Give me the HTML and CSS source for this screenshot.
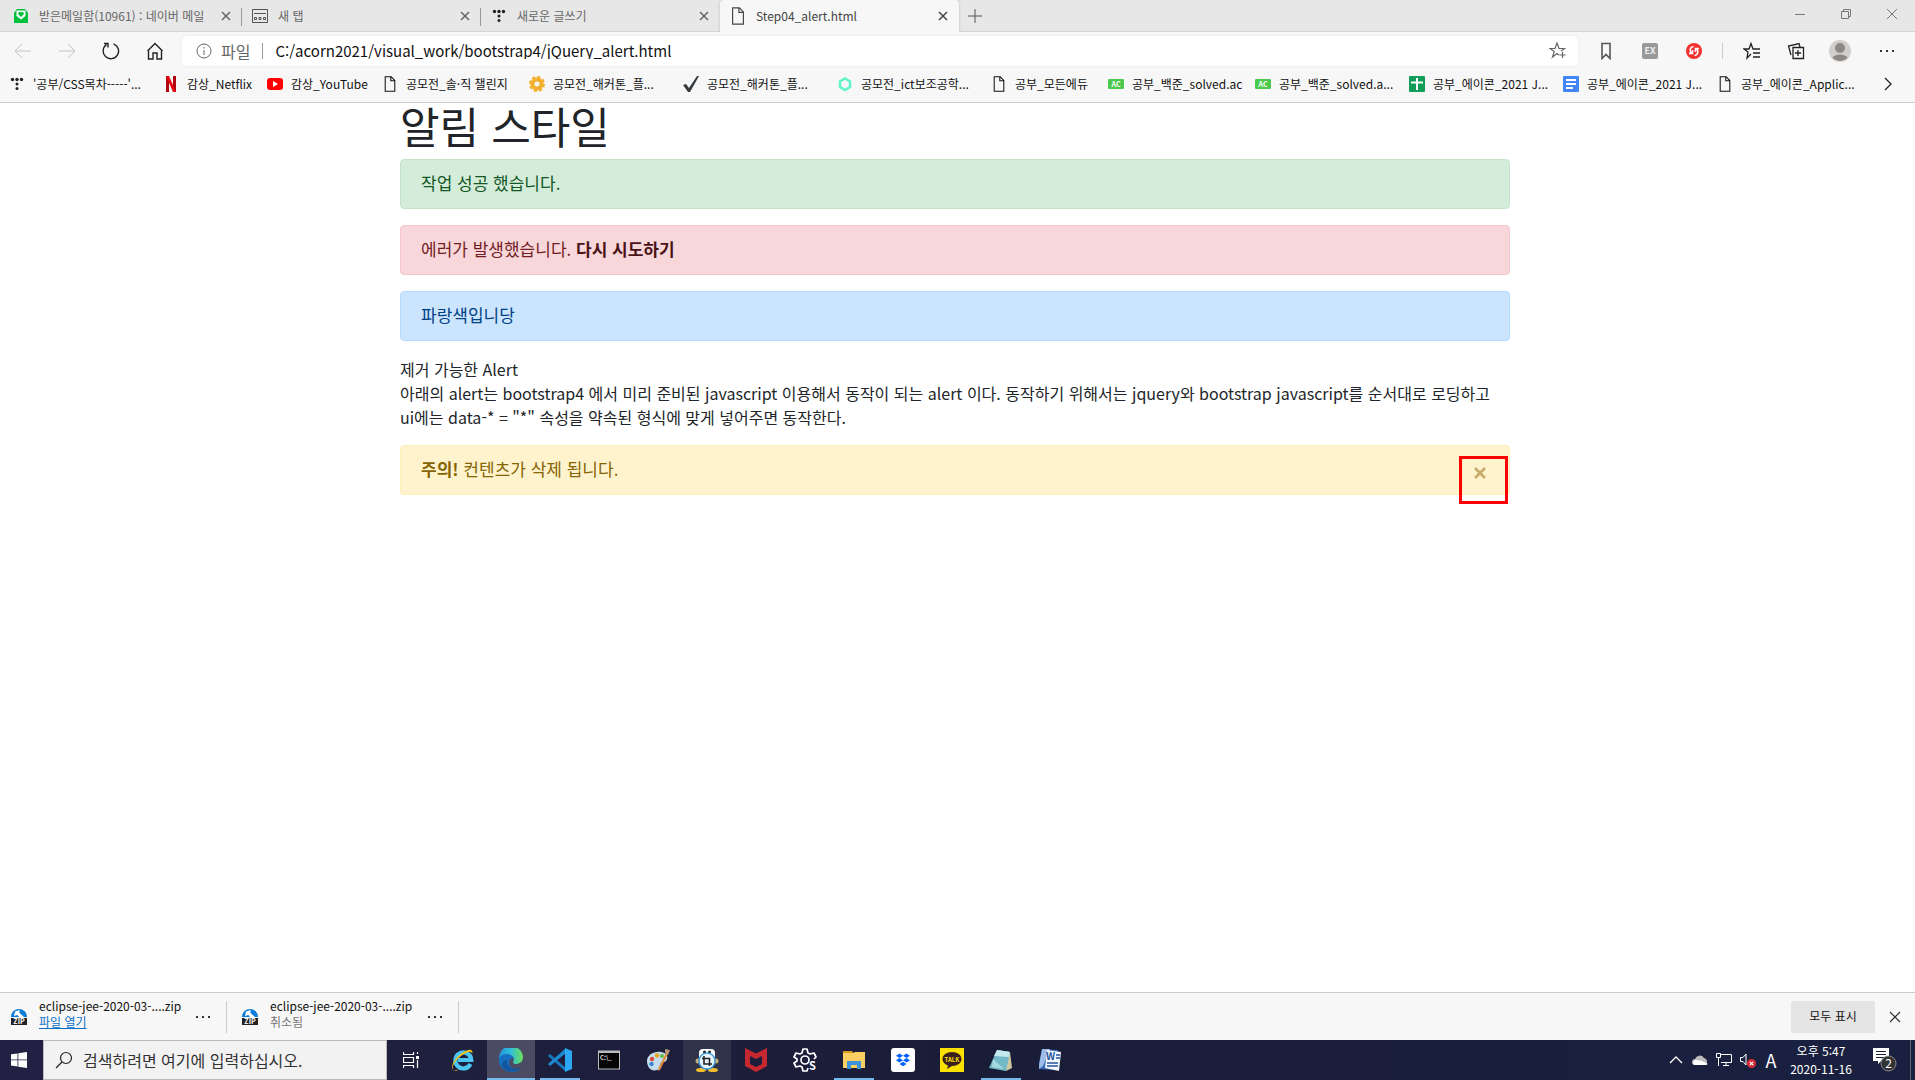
FILE: index.html
```html
<!DOCTYPE html>
<html lang="ko">
<head>
<meta charset="utf-8">
<title>Step04_alert.html</title>
<link rel="stylesheet" href="styles.css">
</head>
<body>
<svg class="defs" aria-hidden="true">
  <symbol id="i-x" viewBox="0 0 16 16"><path d="M4 4l8 8M12 4l-8 8" fill="none" stroke="currentColor" stroke-width="1.5"/></symbol>
  <symbol id="i-page" viewBox="0 0 16 20"><path d="M2 1h7.500l4.500 4.500v13.500h-12zM9 1v5h5" fill="none" stroke="currentColor" stroke-width="1.300"/></symbol>
  <symbol id="i-tistory" viewBox="0 0 16 16"><g fill="#222"><circle cx="3.500" cy="3.500" r="1.700"/><circle cx="8" cy="3.500" r="1.700"/><circle cx="12.500" cy="3.500" r="1.700"/><circle cx="8" cy="8" r="1.500"/><circle cx="8" cy="12.500" r="1.500"/></g></symbol>
  <symbol id="i-dots" viewBox="0 0 16 16"><g fill="#333"><rect x="1" y="7" width="2" height="2"/><rect x="7" y="7" width="2" height="2"/><rect x="13" y="7" width="2" height="2"/></g></symbol>
</svg>

<header class="browser">
  <div class="tabs">
    <div class="tab">
      <svg class="ico" viewBox="0 0 16 16"><path d="M1 5l3-4h8l3 4v10H1z" fill="#03c03c"/><path d="M3.500 2.500h9v5.500L8 11.500 3.500 8z" fill="#fff"/><path d="M8 9L5.500 6.500a1.500 1.500 0 0 1 2.500-2 1.500 1.500 0 0 1 2.500 2z" fill="#03c03c"/></svg>
      <span class="tab-title">받은메일함(10961) : 네이버 메일</span>
      <button class="tab-close" aria-label="닫기"><svg><use href="#i-x"/></svg></button>
    </div>
    <div class="tab">
      <svg class="ico" viewBox="0 0 16 16"><g fill="none" stroke="#555"><path d="M.5 1.500h15v13H.5zM2 5.500h12"/><path d="M2.500 9.500h2v2h-2zM7 9.500h2v2H7zM11.500 9.500h2v2h-2z"/></g></svg>
      <span class="tab-title">새 탭</span>
      <button class="tab-close" aria-label="닫기"><svg><use href="#i-x"/></svg></button>
    </div>
    <div class="tab">
      <svg class="ico"><use href="#i-tistory"/></svg>
      <span class="tab-title">새로운 글쓰기</span>
      <button class="tab-close" aria-label="닫기"><svg><use href="#i-x"/></svg></button>
    </div>
    <div class="tab active">
      <svg class="ico"><use href="#i-page"/></svg>
      <span class="tab-title">Step04_alert.html</span>
      <button class="tab-close" aria-label="닫기"><svg><use href="#i-x"/></svg></button>
    </div>
    <button class="new-tab" aria-label="새 탭"><svg viewBox="0 0 14 14"><path d="M7 0v14M0 7h14" stroke="#555"/></svg></button>
    <div class="window-controls">
      <button aria-label="최소화"><svg viewBox="0 0 12 12"><path d="M1 6.500h10" stroke="#777"/></svg></button>
      <button aria-label="이전 크기로"><svg viewBox="0 0 12 12"><path d="M1.500 3.500h7v7h-7zM3.500 3.500v-2h7v7h-2" fill="none" stroke="#777"/></svg></button>
      <button aria-label="창 닫기"><svg viewBox="0 0 12 12"><path d="M1 1l10 10M11 1L1 11" stroke="#777"/></svg></button>
    </div>
  </div>

  <div class="toolbar">
    <div class="nav">
      <button aria-label="뒤로"><svg viewBox="0 0 18 18"><path d="M17 9H1M8 2L1 9l7 7" fill="none" stroke="#c4c4c4"/></svg></button>
      <button aria-label="앞으로"><svg viewBox="0 0 18 18"><path d="M1 9h16M10 2l7 7-7 7" fill="none" stroke="#c4c4c4"/></svg></button>
      <button aria-label="새로 고침"><svg viewBox="0 0 18 18"><path d="M11.500 1.800A7.700 7.700 0 1 1 4.500 2.700M2 1.500h4v4" fill="none" stroke="#222" stroke-width="1.400"/></svg></button>
      <button aria-label="홈"><svg viewBox="0 0 18 18"><path d="M2.500 8v9h4.500v-6h4v6h4.500V8M1.500 9L9 1.500 16.500 9" fill="none" stroke="#222" stroke-width="1.400"/></svg></button>
    </div>
    <div class="address">
      <svg class="info" viewBox="0 0 16 16"><circle cx="8" cy="8" r="7" fill="none" stroke="#666"/><path d="M8 7v5M8 4v1.500" stroke="#666"/></svg>
      <span class="scheme">파일</span>
      <input class="url" type="text" aria-label="주소" value="C:/acorn2021/visual_work/bootstrap4/jQuery_alert.html">
      <button class="fav" aria-label="즐겨찾기에 추가"><svg viewBox="0 0 18 18"><path d="M10 13l-2-1.500L3.500 15l1.700-5.500L1 6.500h5L8 1l2 5.500h5.500L12 9M13.500 10v6M10.500 13h6" fill="none" stroke="#666" stroke-width="1.200"/></svg></button>
    </div>
    <div class="actions">
      <button aria-label="책갈피"><svg viewBox="0 0 18 18"><path d="M5 1.500h8v15l-4-4-4 4z" fill="none" stroke="#555" stroke-width="1.600"/></svg></button>
      <button aria-label="EX"><svg viewBox="0 0 18 18"><rect x="1" y="1" width="16" height="16" rx="2" fill="#999"/><text x="9" y="12" font-size="9" font-weight="700" text-anchor="middle" fill="#eee">EX</text></svg></button>
      <button aria-label="동기화"><svg viewBox="0 0 18 18"><circle cx="9" cy="9" r="8" fill="#f6302f"/><path d="M8.500 4.500C5.500 5 4.500 8 5.500 10l1 1.500M4 11.500h3.500V8M9.500 13.500c3-.5 4-3.500 3-5.500l-1-1.500M14 6.500h-3.500V10" fill="none" stroke="#fff" stroke-width="1.600"/></svg></button>
      <span class="rule"></span>
      <button aria-label="즐겨찾기"><svg viewBox="0 0 18 18"><path d="M8 12l-4 4 1-6-4-3h5l2-5.500L10 7h7M10 11h7M10 15h7" fill="none" stroke="#222" stroke-width="1.300"/></svg></button>
      <button aria-label="컬렉션"><svg viewBox="0 0 18 18"><path d="M6 5.500h10.500v11H6zM11 8v6M8 11h6M4 13L1.500 4 12 1.500 13 5" fill="none" stroke="#222" stroke-width="1.300"/></svg></button>
      <button aria-label="프로필"><svg class="avatar" viewBox="0 0 22 22"><circle cx="11" cy="11" r="11" fill="#d0cfcd"/><circle cx="11" cy="8" r="5" fill="#8b8886"/><path d="M3.500 18a8 5.500 0 0 1 15 0 11 11 0 0 1-15 0z" fill="#8b8886"/></svg></button>
      <button class="menu" aria-label="설정"><svg><use href="#i-dots"/></svg></button>
    </div>
  </div>

  <nav class="bookmarks">
    <a href="#"><svg class="ico"><use href="#i-tistory"/></svg><span>'공부/CSS목차-----'...</span></a>
    <a href="#"><svg class="ico" viewBox="0 0 16 16"><path d="M3 0h3v16H3zM10 0h3v16h-3z" fill="#b1060f"/><path d="M3 0h3l7 16h-3z" fill="#e50914"/></svg><span>감상_Netflix</span></a>
    <a href="#"><svg class="ico" viewBox="0 0 16 16"><rect y="2" width="16" height="12" rx="3" fill="#f00"/><path d="M6 5l5 3-5 3z" fill="#fff"/></svg><span>감상_YouTube</span></a>
    <a href="#"><svg class="ico"><use href="#i-page"/></svg><span>공모전_솔·직 챌린지</span></a>
    <a href="#"><svg class="ico" viewBox="0 0 16 16"><circle cx="8" cy="8" r="4.500" fill="none" stroke="#f2b02e" stroke-width="4"/><circle cx="8" cy="8" r="6.700" fill="none" stroke="#f2b02e" stroke-width="2.600" stroke-dasharray="3.260 2"/></svg><span>공모전_해커톤_플...</span></a>
    <a href="#"><svg class="ico" viewBox="0 0 16 16"><path d="M0 9l3-1 3 4L14 0h2L7 16H5z" fill="#333a40"/></svg><span>공모전_해커톤_플...</span></a>
    <a href="#"><svg class="ico" viewBox="0 0 16 16"><path d="M8 2.500l5 3v5.500l-5 3-5-3V5.500z" fill="none" stroke="#5df5c8" stroke-width="2.400"/></svg><span>공모전_ict보조공학...</span></a>
    <a href="#"><svg class="ico"><use href="#i-page"/></svg><span>공부_모든에듀</span></a>
    <a href="#"><svg class="ico" viewBox="0 0 16 16"><rect y="3" width="16" height="10" rx="1" fill="#4cc94c"/><text x="8" y="11" font-size="7" font-weight="700" text-anchor="middle" fill="#fff">AC</text></svg><span>공부_백준_solved.ac</span></a>
    <a href="#"><svg class="ico" viewBox="0 0 16 16"><rect y="3" width="16" height="10" rx="1" fill="#4cc94c"/><text x="8" y="11" font-size="7" font-weight="700" text-anchor="middle" fill="#fff">AC</text></svg><span>공부_백준_solved.a...</span></a>
    <a href="#"><svg class="ico" viewBox="0 0 16 16"><rect width="16" height="16" rx="1" fill="#0f9d58"/><path d="M8 2v12M2 6.500h12" stroke="#fff" stroke-width="2"/></svg><span>공부_에이콘_2021 J...</span></a>
    <a href="#"><svg class="ico" viewBox="0 0 16 16"><rect width="16" height="16" rx="1" fill="#4285f4"/><path d="M3 4h10M3 8h10M3 12h7" stroke="#fff" stroke-width="2"/></svg><span>공부_에이콘_2021 J...</span></a>
    <a href="#"><svg class="ico"><use href="#i-page"/></svg><span>공부_에이콘_Applic...</span></a>
    <button class="more" aria-label="더 보기"><svg viewBox="0 0 8 14"><path d="M1 1l6 6-6 6" fill="none" stroke="#222" stroke-width="1.300"/></svg></button>
  </nav>
</header>

<main class="page">
  <div class="container">
    <h1>알림 스타일</h1>
    <div class="alert success">작업 성공 했습니다.</div>
    <div class="alert danger">에러가 발생했습니다. <a href="#">다시 시도하기</a></div>
    <div class="alert primary">파랑색입니당</div>
    <p>제거 가능한 Alert<br>아래의 alert는 bootstrap4 에서 미리 준비된 javascript 이용해서 동작이 되는 alert 이다. 동작하기 위해서는 jquery와 bootstrap javascript를 순서대로 로딩하고<br>ui에는 data-* = "*" 속성을 약속된 형식에 맞게 넣어주면 동작한다.</p>
    <div class="alert warning">
      <strong>주의!</strong> 컨텐츠가 삭제 됩니다.
      <button class="close" aria-label="닫기"><svg viewBox="0 0 12 12"><path d="M1 1l10 10M11 1L1 11" stroke="#c6aa68" stroke-width="2.600"/></svg></button>
      <span class="marker"></span>
    </div>
  </div>
</main>

<section class="downloads">
  <div class="download">
    <svg class="ico" viewBox="0 0 16 16"><path d="M0 8a8 8 0 0 1 16 0z" fill="#0a7bd6"/><path d="M4 2.500L8.500 1v3l4.500 4H8L6.500 6 3 7z" fill="#fff"/><rect y="9" width="16" height="7" fill="#222"/><text x="8" y="15" font-size="7" font-weight="700" text-anchor="middle" fill="#fff">ZIP</text></svg>
    <div class="file"><span>eclipse-jee-2020-03-....zip</span><a href="#">파일 열기</a></div>
    <button aria-label="옵션"><svg class="ico"><use href="#i-dots"/></svg></button>
  </div>
  <div class="download">
    <svg class="ico" viewBox="0 0 16 16"><path d="M0 8a8 8 0 0 1 16 0z" fill="#0a7bd6"/><path d="M4 2.500L8.500 1v3l4.500 4H8L6.500 6 3 7z" fill="#fff"/><rect y="9" width="16" height="7" fill="#222"/><text x="8" y="15" font-size="7" font-weight="700" text-anchor="middle" fill="#fff">ZIP</text></svg>
    <div class="file"><span>eclipse-jee-2020-03-....zip</span><span class="state">취소됨</span></div>
    <button aria-label="옵션"><svg class="ico"><use href="#i-dots"/></svg></button>
  </div>
  <button class="show-all">모두 표시</button>
  <button class="bar-close" aria-label="닫기"><svg viewBox="0 0 12 12"><path d="M1 1l10 10M11 1L1 11" stroke="#333" stroke-width="1.200"/></svg></button>
</section>

<footer class="taskbar">
  <button class="start" aria-label="시작"><svg viewBox="0 0 16 16"><path d="M0 2.300l6.500-.9v6.100H0zM7.300 1.200L16 0v7.500H7.300zM0 8.300h6.500v6.200L0 13.600zM7.300 8.300H16V16l-8.700-1.200z" fill="#fff"/></svg></button>
  <label class="search">
    <svg viewBox="0 0 18 18"><circle cx="11" cy="7" r="5.500" fill="none" stroke="#222" stroke-width="1.200"/><path d="M7 11l-6 6" stroke="#222" stroke-width="1.300"/></svg>
    <input type="text" aria-label="검색" placeholder="검색하려면 여기에 입력하십시오.">
  </label>
  <div class="apps">
    <button aria-label="작업 보기"><svg class="small" viewBox="0 0 16 16"><path d="M.5 0v2.500h10V0M.5 5.500h10v5H.5zM.5 16v-2.500h10V16M14.500 0v2M14.500 8v8" fill="none" stroke="#fff" stroke-width="1.200"/><path d="M13 4h3v3h-3z" fill="#fff"/></svg></button>
    <button aria-label="Internet Explorer"><svg viewBox="0 0 24 24"><path d="M20.500 16a8 8 0 1 1 .8-4H8" fill="none" stroke="#4cc5f3" stroke-width="4.200"/><path d="M3 22C-1 18 8 5 18 2c4-1 5 1 4 4 0-3-3-3-7-.5C8 9 1 17 3 22c1 1 4 0 6-1-2 2-5 2.500-6 1z" fill="#f5c21b"/></svg></button>
    <button class="open current" aria-label="Edge"><svg viewBox="0 0 24 24"><defs><linearGradient id="eg" x1="0" x2="1"><stop stop-color="#2492dc"/><stop offset=".5" stop-color="#30bfd7"/><stop offset="1" stop-color="#6ee05a"/></linearGradient></defs><path d="M0 11A12 12 0 0 1 24 9c0 5-4 7-7 7-4 0-3-2-2-4 0-3-3-5-6-5-4 0-7 2-9 4z" fill="url(#eg)"/><path d="M0 11c1-3 4-5 8-5 4 0 7 3 7 5-2-2-5 0-5 4s4 6 8 6c2 0 3-1 4-1-2 3-6 4-9 4C5 24-1 18 0 11z" fill="#1670c2"/><path d="M8 12c-1 6 4 9 9 9l5-2c-5 8-18 5-19-2 0-3 2-5 5-5z" fill="#114a8b" opacity=".65"/></svg></button>
    <button class="open" aria-label="Visual Studio Code"><svg viewBox="0 0 24 24"><path d="M0 8l2-2 16 14v4z" fill="#1679bd"/><path d="M0 16l2 2L18 5V0z" fill="#1b8ad3"/><path d="M17 0l7 3v18l-7 3z" fill="#2ba7f3"/></svg></button>
    <button aria-label="명령 프롬프트"><svg viewBox="0 0 24 24"><rect x="1" y="2.500" width="22" height="19" fill="#bbb"/><rect x="2" y="5" width="20" height="15.500" fill="#050505"/><text x="3" y="12" font-size="6" font-weight="700" fill="#ddd">C:\_</text></svg></button>
    <button aria-label="그림판"><svg viewBox="0 0 24 24"><path d="M1 13C1 7 8 3 15 4c6 1 8 5 5 9-2 2-3 0-5 2s1 6-4 7C5 24 1 19 1 13z" fill="#c4ddec"/><circle cx="6" cy="11" r="2.200" fill="#df4736"/><circle cx="11" cy="7.500" r="2.200" fill="#e9a21d"/><circle cx="16" cy="8" r="2" fill="#68b843"/><circle cx="5.500" cy="16" r="2.200" fill="#3e86cf"/><path d="M21 3l2 1-9 18-2 1 .5-3z" fill="#e38b3c"/><path d="M19 1l5 1-2 5-3-2z" fill="#b69474"/></svg></button>
    <button class="hovered" aria-label="캡처 도구"><svg viewBox="0 0 24 24"><path d="M4 5a4 4 0 0 1 4-4h8a4 4 0 0 1 4 4v4H4z" fill="#fff"/><circle cx="9.500" cy="4" r="1.500" fill="#222"/><circle cx="14.500" cy="4" r="1.500" fill="#222"/><circle cx="3" cy="13" r="2.500" fill="#c8ac75"/><circle cx="21" cy="13" r="2.500" fill="#c8ac75"/><ellipse cx="6" cy="22" rx="5" ry="2" fill="#f4bd2b"/><ellipse cx="18" cy="22" rx="5" ry="2" fill="#f4bd2b"/><circle cx="12" cy="13" r="8" fill="#e9f5fc" stroke="#3d9bdc" stroke-width="1.500"/><path d="M9 8v8h8M7 10.500h7.500V18" fill="none" stroke="#222" stroke-width="1.600"/></svg></button>
    <button aria-label="McAfee"><svg viewBox="0 0 24 24"><path d="M1 0l11 5.500L23 0v18l-11 6-11-6zM6 8v8l6 3 6-3V8l-6 3z" fill="#c5282f" fill-rule="evenodd"/></svg></button>
    <button aria-label="설정 도구"><svg viewBox="0 0 24 24"><path d="M15 20l-1 3h-4l-1-4-2-1-4 1-2-4 3-2v-2L1 9l2-4 4 1 2-1 1-4h4l1 4 2 1 4-1 2 4-2 2" fill="none" stroke="#fff" stroke-width="1.700" stroke-linejoin="round"/><circle cx="12" cy="12" r="4" fill="none" stroke="#fff" stroke-width="1.700"/><text x="16" y="22" font-size="11" font-weight="700" fill="#fff">S</text></svg></button>
    <button class="open" aria-label="파일 탐색기"><svg viewBox="0 0 24 24"><path d="M1 3h9l2 3H1z" fill="#d99b18"/><path d="M1 5h10l2-1h10v16H1z" fill="#fbcf62"/><path d="M5 13h14v8h-4v-4H9v4H5z" fill="#3d94dc"/></svg></button>
    <button aria-label="Dropbox"><svg viewBox="0 0 24 24"><rect width="24" height="24" rx="3" fill="#fff"/><path d="M8.500 5.500l3.500 2.200L8.500 10 5 7.700zM15.500 5.500L19 7.700 15.500 10 12 7.700zM8.500 10l3.500 2.300-3.500 2.200L5 12.300zM15.500 10l3.500 2.300-3.500 2.200-3.500-2.200zM12 13.700l3.500 2.300-3.500 2.200L8.500 16z" fill="#0061fe"/></svg></button>
    <button aria-label="카카오톡"><svg viewBox="0 0 24 24"><rect width="24" height="24" fill="#fae100"/><path d="M12 4c5.500 0 9.500 3 9.500 7s-4 7-9.500 7l-5 3 1-3.500C5 16.500 2.500 14 2.500 11c0-4 4-7 9.500-7z" fill="#3b1e1e"/><text x="12" y="13.500" font-size="6" font-weight="700" text-anchor="middle" fill="#fae100">TALK</text></svg></button>
    <button class="open" aria-label="메모장"><svg viewBox="0 0 24 24"><path d="M8 2l13 2 2 16-6 3z" fill="#d1c6a0"/><path d="M8 2l13 2-4 19-17-3z" fill="#73b9c8"/><path d="M8 2l13 2-1 5L5 8z" fill="#c4e8ec"/><path d="M4 11l11 10-12-2z" fill="#a5d8df"/></svg></button>
    <button aria-label="Word"><svg viewBox="0 0 24 24"><path d="M4 1l16 1-3 20-16-1c0-8 2-13 3-20z" fill="#3768b6"/><path d="M4 1h8L5 18l-4 3C1 13 3 8 4 1z" fill="#9dbce8"/><path d="M9 2l14 2-2 19-14-3z" fill="#f4f7fc"/><text x="8" y="12" font-size="10" font-weight="700" fill="#2853a0">W</text><path d="M18 7h4M18 10h4M9 15h11M9 18h11" stroke="#2853a0" stroke-width="1.300"/></svg></button>
  </div>
  <div class="tray">
    <button aria-label="숨겨진 아이콘"><svg viewBox="0 0 16 16"><path d="M2 11l6-6 6 6" fill="none" stroke="#fff" stroke-width="1.300"/></svg></button>
    <button aria-label="OneDrive"><svg viewBox="0 0 16 16"><path d="M3 13a3 3 0 0 1 0-6 5 5 0 0 1 9-1 3.700 3.700 0 0 1 1 7z" fill="#bbb"/><path d="M2 13a3 3 0 0 1 3-5l5 1 6 3-2 1z" fill="#fff"/></svg></button>
    <button aria-label="네트워크"><svg viewBox="0 0 16 16"><path d="M5 2.500h10.500v8H5M10 11v3M7 13.500h6M2.500 5.500V14M.5 1.500h4v4h-4z" fill="none" stroke="#fff"/></svg></button>
    <button aria-label="음소거"><svg viewBox="0 0 16 16"><path d="M6 2L3 5.500H.5v4H3L6 13z" fill="none" stroke="#fff"/><circle cx="11.500" cy="11.500" r="4.500" fill="#d92a34"/><path d="M9.800 9.800l3.400 3.400M13.200 9.800l-3.400 3.400" stroke="#fff" stroke-width="1.200"/></svg></button>
    <button class="ime">A</button>
    <div class="clock"><span>오후 5:47</span><span>2020-11-16</span></div>
    <button class="notice" aria-label="알림"><svg viewBox="0 0 24 24"><path d="M0 0h16v13H8l-3 3v-3H0z" fill="#fff"/><path d="M3 3.500h10M3 6.500h10M3 9.500h10" stroke="#1b1f3c"/><circle cx="15.500" cy="15.500" r="7.500" fill="#333" stroke="#888"/><text x="15.500" y="20" font-size="12" text-anchor="middle" fill="#fff">2</text></svg></button>
  </div>
</footer>
</body>
</html>
```
FILE: styles.css
```css
* { box-sizing: border-box; }

body {
  margin: 0;
  min-height: 100vh;
  display: flex;
  flex-direction: column;
  background: #fff;
  color: #212529;
  font: 12px/16px "Noto Sans CJK KR", sans-serif;
}

button {
  display: flex;
  align-items: center;
  justify-content: center;
  padding: 0;
  border: 0;
  background: none;
  color: inherit;
  font: inherit;
}

a { color: inherit; text-decoration: none; }
input { border: 0; padding: 0; background: none; font: inherit; outline: 0; }
svg { display: block; flex: none; width: 16px; height: 16px; }
.defs { position: absolute; width: 0; height: 0; }

/* Tab strip */
.browser { background: #f7f7f7; border-bottom: 1px solid #ccc; }
.tabs {
  display: flex;
  height: 32px;
  padding-left: 3px;
  background: #e7e7e7;
  box-shadow: inset 0 -1px #d4d4d4;
}
.tab {
  display: flex;
  align-items: center;
  gap: 10px;
  width: 239px;
  padding: 0 8px 0 10px;
  color: #666;
  background: linear-gradient(#999, #999) right 8px / 1px 18px no-repeat;
}
.tab:nth-child(3) { background: none; }
.tab.active {
  border-radius: 4px 4px 0 0;
  background: #f7f7f7;
  box-shadow: 0 0 3px #bbb;
  clip-path: inset(0 -4px 0 -4px);
  color: #444;
}
.tab-title { flex: 1; min-width: 0; white-space: nowrap; }
.tab-close { width: 16px; height: 16px; }
.tab.active .ico { height: 18px; }
.new-tab { width: 32px; }
.new-tab svg { width: 14px; height: 14px; }
.window-controls { display: flex; margin-left: auto; height: 28px; }
.window-controls button { width: 46px; }
.window-controls svg { width: 12px; height: 12px; }

/* Address row */
.toolbar { display: flex; align-items: center; height: 38px; }
.nav { display: flex; padding: 0 5px 0 1px; }
.nav button { width: 44px; height: 38px; }
.nav svg, .fav svg, .actions svg { width: 18px; height: 18px; }
.address {
  flex: 1;
  display: flex;
  align-items: center;
  height: 30px;
  padding: 0 11px 0 14px;
  border-radius: 4px;
  background: #fff;
  box-shadow: 0 0 2px #ddd;
  font-size: 16px;
}
.scheme {
  margin: 0 12px 0 9px;
  padding-right: 12px;
  border-right: 1px solid #999;
  color: #666;
}
.url { flex: 1; color: #111; font-size: 15px; }
.actions { display: flex; align-items: center; padding: 0 3px 0 6px; }
.actions button { width: 44px; height: 38px; }
.actions .menu { width: 50px; }
.actions .menu svg { width: 16px; height: 16px; }
.actions .avatar { width: 22px; height: 22px; }
.rule { width: 1px; height: 16px; margin: 0 7px 0 6px; background: #ccc; }

/* Bookmarks */
.bookmarks {
  display: grid;
  grid-template-columns: 154px 104px 115px 147px 154px 154px 154px 117px 147px 154px 154px 154px 154px 1fr;
  align-items: center;
  height: 32px;
  padding: 0 19px 4px 9px;
  color: #111;
}
.bookmarks a { display: flex; align-items: center; gap: 8px; white-space: nowrap; }
.more { justify-self: end; width: 16px; height: 16px; }
.more svg { width: 8px; height: 14px; }

/* Page */
.page { flex: 1; padding-right: 5px; font-size: 16px; line-height: 24px; }
.container { max-width: 1140px; margin: 0 auto; padding: 0 15px; }
h1 { margin: 0 0 12px; font-size: 43px; line-height: 44px; font-weight: 400; }
p { margin: 0 0 16px; }
.alert {
  position: relative;
  margin-bottom: 16px;
  padding: 11px 20px 13px;
  border: 1px solid;
  border-radius: 4px;
  font-size: 17px;
}
.alert a { font-weight: 700; color: #491217; }
.success { color: #155724; background: #d4edda; border-color: #c3e6cb; }
.danger { color: #721c24; background: #f8d7da; border-color: #f5c6cb; }
.primary { color: #004085; background: #cce5ff; border-color: #b8daff; }
.warning { color: #856404; background: #fff3cd; border-color: #ffeeba; }
.close { position: absolute; top: 0; right: 0; width: 58px; height: 54px; }
.close svg { width: 12px; height: 12px; }
.marker { position: absolute; top: 10px; right: 1px; width: 49px; height: 48px; border: 3px solid #f00; }

/* Downloads */
.downloads {
  display: flex;
  align-items: center;
  height: 48px;
  border-top: 1px solid #ccc;
  background: #f7f7f7;
}
.download {
  display: flex;
  align-items: center;
  width: 232px;
  height: 32px;
  padding: 0 15px;
  border-right: 1px solid #ccc;
}
.download:first-child { width: 227px; padding-left: 11px; }
.file { flex: 1; display: flex; flex-direction: column; align-items: flex-start; margin-left: 12px; padding-bottom: 6px; color: #111; }
.file a { color: #0a6fc9; text-decoration: underline; }
.state { color: #777; }
.show-all { width: 84px; height: 32px; margin-left: auto; padding-bottom: 2px; border-radius: 2px; background: #e4e4e4; color: #111; }
.bar-close { width: 40px; height: 32px; }
.bar-close svg { width: 12px; height: 12px; }

/* Taskbar */
.taskbar { display: flex; height: 40px; background: linear-gradient(90deg, #232143, #1a1d38 50%, #1a2040); color: #fff; }
.start { width: 43px; padding-right: 5px; }
.search {
  display: flex;
  align-items: center;
  gap: 10px;
  width: 344px;
  padding: 0 11px;
  border: 1px solid #bbb;
  background: #f2f2f2;
  font-size: 16px;
}
.search svg { width: 18px; height: 18px; }
.search input { flex: 1; min-width: 0; }
.search input::placeholder { color: #333; opacity: 1; }
.apps { display: flex; gap: 1px; padding-left: 2px; }
.apps button { width: 48px; }
.apps button:first-child { padding-right: 4px; }
.apps svg { width: 24px; height: 24px; }
.apps .small { width: 16px; height: 16px; }
.apps .open { background: linear-gradient(#76b9ed, #76b9ed) center bottom / 40px 2px no-repeat; }
.apps .current { background: linear-gradient(#76b9ed, #76b9ed) center bottom / 48px 2px no-repeat, #4b4b63; }
.apps .hovered { background: #31334b; }
.tray { display: flex; align-items: center; margin-left: auto; padding-right: 4px; }
.tray button { width: 24px; height: 40px; }
.tray .ime { font-size: 18px; width: 22px; }
.clock { display: flex; flex-direction: column; align-items: center; width: 78px; line-height: 18px; }
.tray .notice { width: 51px; border-right: 1px solid #666; }
.notice svg { width: 24px; height: 24px; }
```
